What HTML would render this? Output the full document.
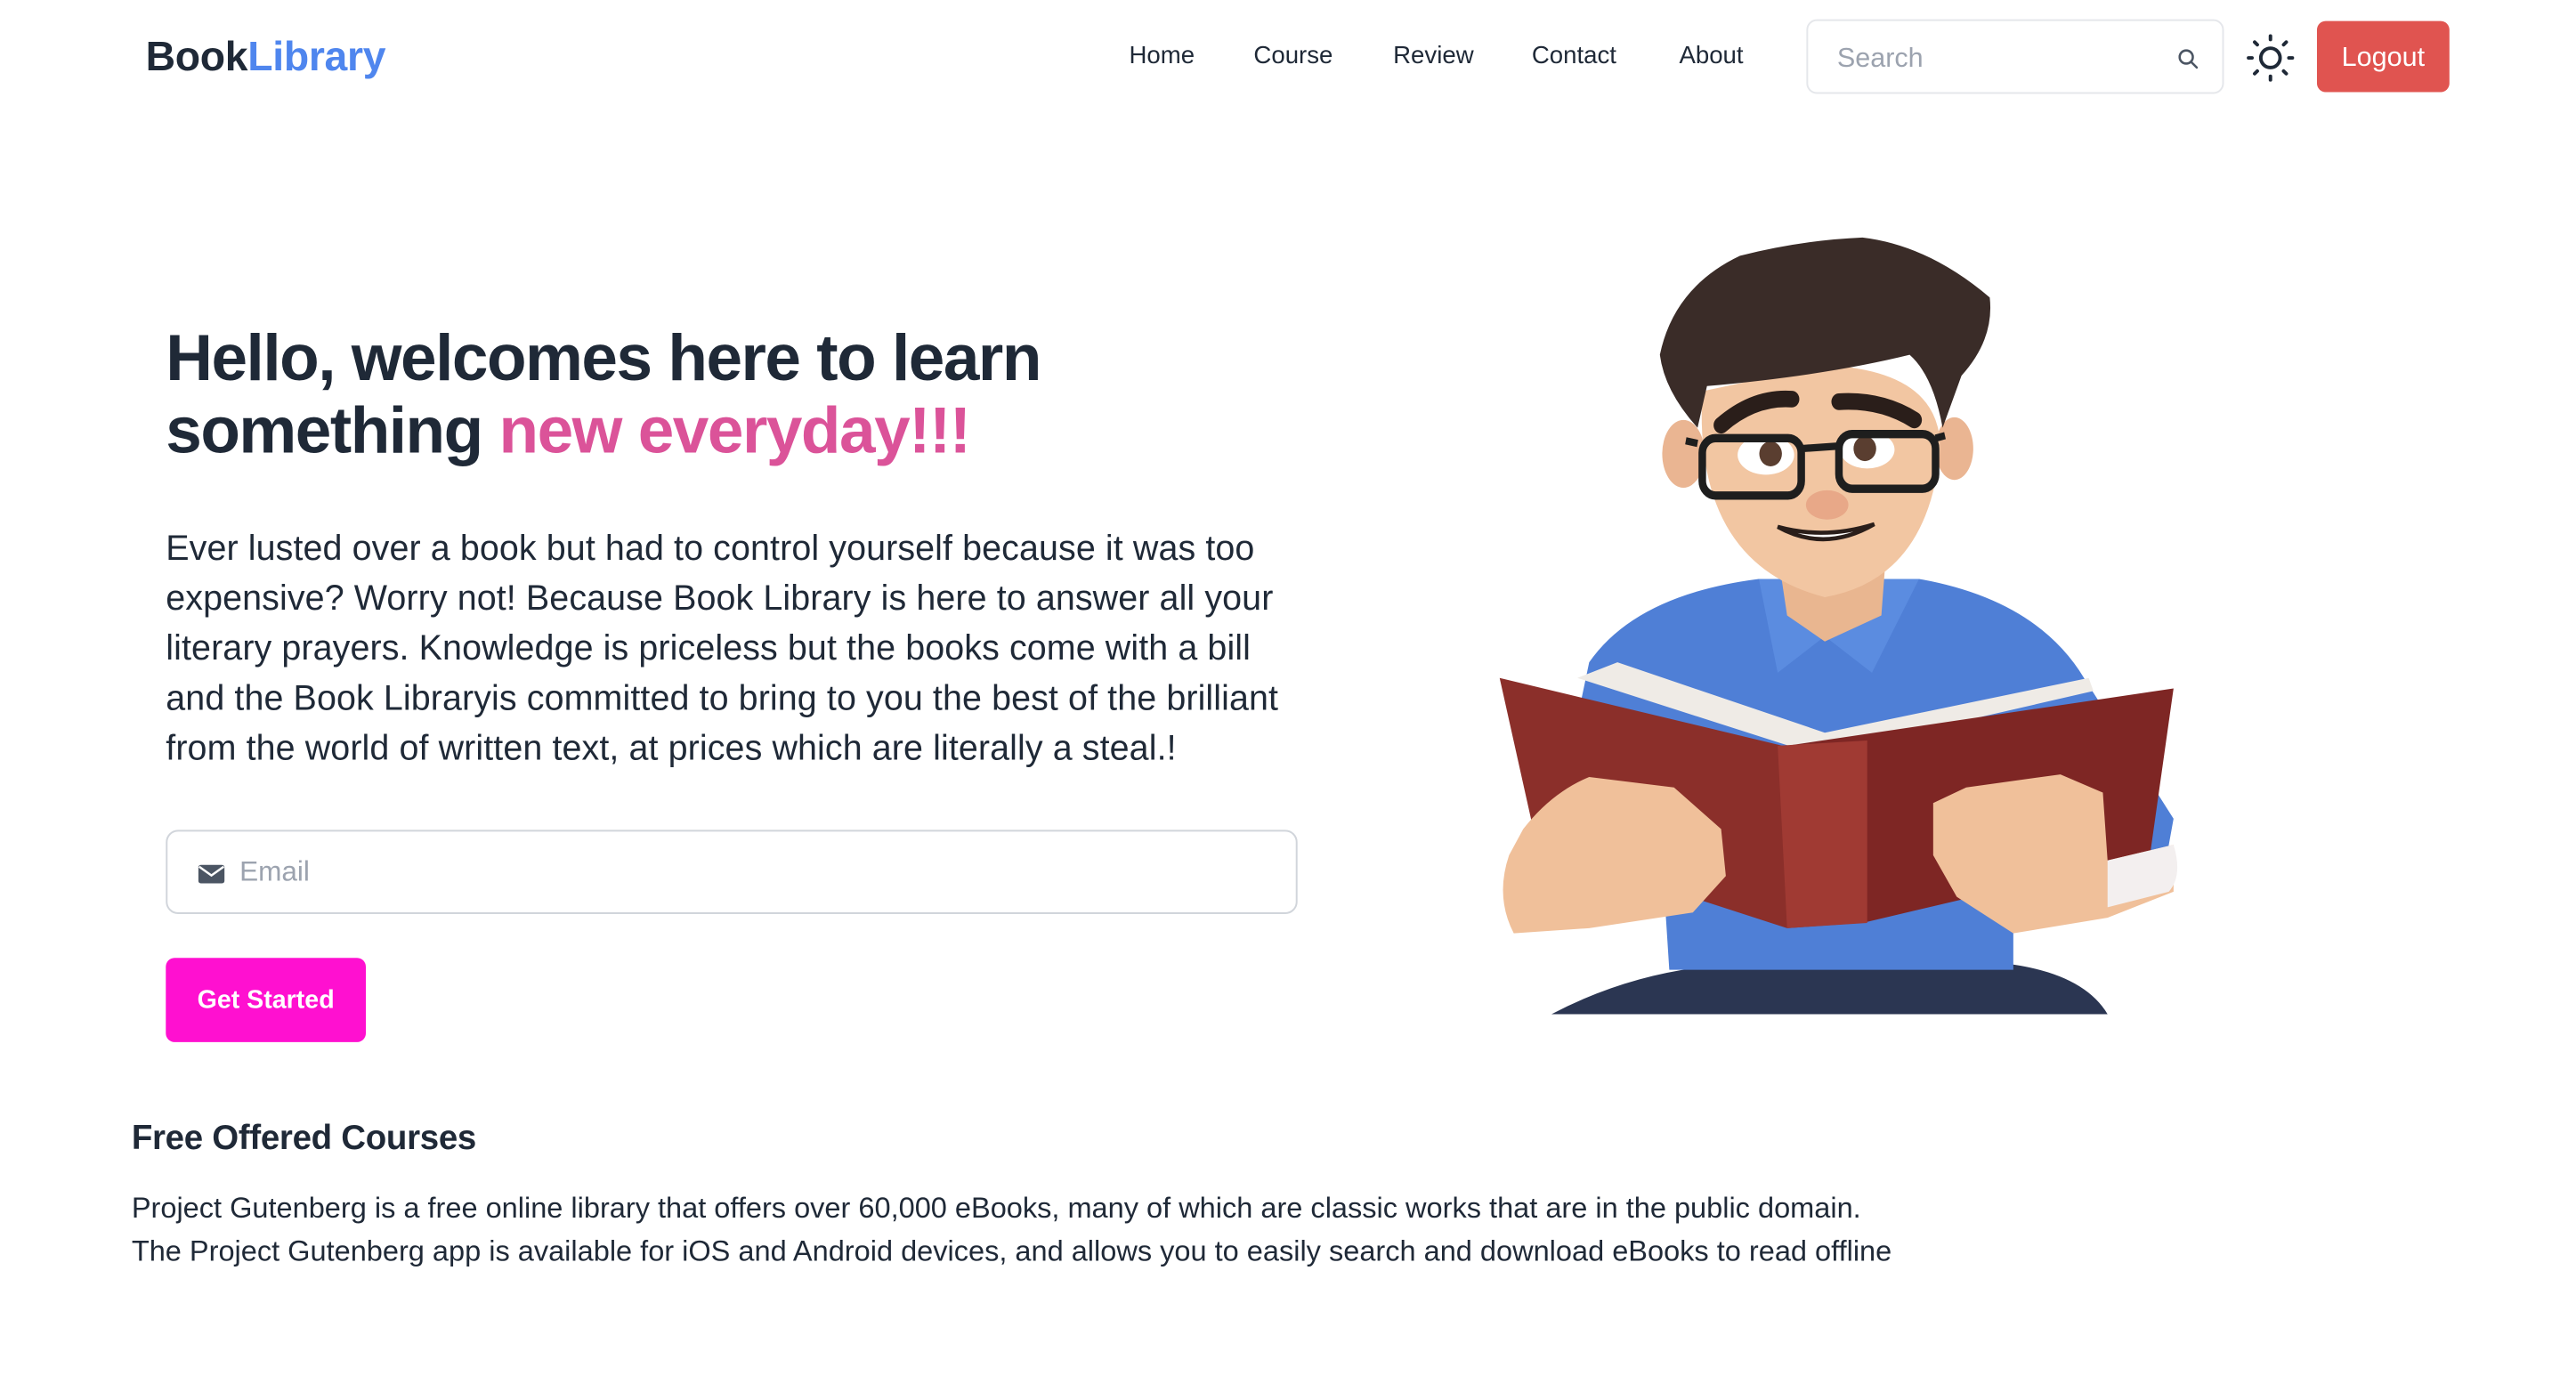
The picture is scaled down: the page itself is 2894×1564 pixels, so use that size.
<!DOCTYPE html>
<html><head><meta charset="utf-8"><style>
*{margin:0;padding:0;box-sizing:border-box}
body{width:2894px;height:1564px;background:#fff;font-family:"Liberation Sans",sans-serif;color:#1f2937;position:relative;overflow:hidden}
#w{position:absolute;left:0;top:0;width:2936px;height:1587px;transform:scale(0.9856);transform-origin:0 0}
.a{position:absolute;white-space:nowrap}
.logo{left:166px;top:36px;font-size:47px;font-weight:bold;letter-spacing:-0.3px}
.logo span{color:#4f86ee}
.nav{top:47px;font-size:28px;color:#1f2937}
.search{left:2059px;top:22px;width:476px;height:85px;border:2px solid #e5e7eb;border-radius:12px}
.search span{position:absolute;left:33px;top:24px;font-size:31px;color:#9ca3af}
.logout{left:2641px;top:24px;width:151px;height:81px;background:#e05450;border-radius:10px;color:#fff;font-size:31px;text-align:center;line-height:81px}
h1{position:absolute;left:189px;top:366px;font-size:74px;line-height:83px;font-weight:bold;letter-spacing:-1.5px;color:#1f2937}
h1 span{color:#db5399}
.p{left:189px;top:597px;font-size:40px;line-height:57px;color:#1f2937;letter-spacing:0.1px}
.email{left:189px;top:946px;width:1290px;height:96px;border:2px solid #d1d5db;border-radius:14px}
.email span{position:absolute;left:82px;top:27px;font-size:32px;color:#9ca3af}
.btn{left:189px;top:1092px;width:228px;height:96px;background:#ff10d0;border-radius:10px;color:#fff;font-weight:bold;font-size:29px;text-align:center;line-height:96px}
.h2{left:150px;top:1276px;font-size:39px;font-weight:bold;letter-spacing:-0.3px}
.p2{left:150px;top:1352px;font-size:33px;line-height:49px;letter-spacing:0}
</style></head><body><div id="w">
<div class="a logo">Book<span>Library</span></div>
<div class="a nav" style="left:1287px">Home</div>
<div class="a nav" style="left:1429px">Course</div>
<div class="a nav" style="left:1588px">Review</div>
<div class="a nav" style="left:1746px">Contact</div>
<div class="a nav" style="left:1914px">About</div>
<div class="a search"><span>Search</span>
<svg style="position:absolute;left:420px;top:30px" width="26" height="26" viewBox="0 0 26 26"><circle cx="11" cy="11" r="7.5" fill="none" stroke="#4b5563" stroke-width="2.6"/><path d="M16.5 16.5L23 23" stroke="#4b5563" stroke-width="2.6" stroke-linecap="round"/></svg></div>
<svg class="a" style="left:2560px;top:38px" width="56" height="56" viewBox="0 0 56 56"><circle cx="28" cy="28" r="11" fill="none" stroke="#1f2937" stroke-width="4"/><g stroke="#1f2937" stroke-width="4" stroke-linecap="round"><path d="M28 3v4M28 49v4M3 28h4M49 28h4M10 10l3 3M43 43l3 3M10 46l3-3M43 13l3-3"/></g></svg>
<div class="a logout">Logout</div>
<h1>Hello, welcomes here to learn<br>something <span>new everyday!!!</span></h1>
<div class="a p">Ever lusted over a book but had to control yourself because it was too<br>expensive? Worry not! Because Book Library is here to answer all your<br>literary prayers. Knowledge is priceless but the books come with a bill<br>and the Book Libraryis committed to bring to you the best of the brilliant<br>from the world of written text, at prices which are literally a steal.!</div>
<div class="a email"><svg style="position:absolute;left:35px;top:36px" width="30" height="24" viewBox="0 0 30 24"><rect x="0" y="2" width="30" height="21" rx="3" fill="#4b5563"/><path d="M1 4l14 10 14-10" fill="none" stroke="#fff" stroke-width="2.5"/></svg><span>Email</span></div>
<div class="a btn">Get Started</div>
<div class="a h2">Free Offered Courses</div>
<div class="a p2">Project Gutenberg is a free online library that offers over 60,000 eBooks, many of which are classic works that are in the public domain.<br>The Project Gutenberg app is available for iOS and Android devices, and allows you to easily search and download eBooks to read offline</div>
<svg class="a" style="left:1704px;top:250px" width="838" height="915" viewBox="0 0 1560 1540" preserveAspectRatio="none">
<path d="M120 1525 Q300 1440 500 1430 L1100 1430 Q1250 1450 1300 1525 Z" fill="#2b3652"/>
<path d="M200 850 Q300 720 560 690 L900 690 Q1150 730 1250 880 L1440 1150 L1420 1250 L1100 1300 L1100 1440 L370 1440 L360 1300 L100 1280 Z" fill="#4f7fd6"/>
<path d="M560 690 L600 870 L700 800 L800 870 L900 690 Z" fill="#5b8ce0"/>
<path d="M600 640 L620 760 L700 810 L820 760 L830 640 Z" fill="#e9b690"/>
<ellipse cx="400" cy="450" rx="45" ry="65" fill="#eab592"/>
<ellipse cx="975" cy="440" rx="40" ry="60" fill="#eab592"/>
<path d="M440 330 Q420 660 700 725 Q920 690 945 440 Q945 290 700 280 Z" fill="#f2c6a2"/>
<path d="M350 260 Q380 130 520 70 Q650 40 780 35 Q920 50 1050 150 Q1060 230 990 300 L950 400 Q930 300 880 260 Q700 300 450 320 L430 400 Q360 330 350 260 Z" fill="#3a2c28"/>
<path d="M480 395 Q550 340 630 345" stroke="#2a1e1a" stroke-width="32" fill="none" stroke-linecap="round"/>
<path d="M730 350 Q820 345 890 385" stroke="#2a1e1a" stroke-width="32" fill="none" stroke-linecap="round"/>
<ellipse cx="575" cy="452" rx="60" ry="38" fill="#fff"/><circle cx="585" cy="450" r="24" fill="#5a3e30"/>
<ellipse cx="790" cy="442" rx="58" ry="36" fill="#fff"/><circle cx="785" cy="440" r="24" fill="#5a3e30"/>
<rect x="440" y="420" width="210" height="110" rx="28" fill="none" stroke="#1e1e1e" stroke-width="16"/>
<rect x="730" y="412" width="205" height="105" rx="28" fill="none" stroke="#1e1e1e" stroke-width="16"/>
<path d="M650 440 L730 435 M430 430 L405 425 M935 420 L955 415" stroke="#1e1e1e" stroke-width="14"/>
<ellipse cx="705" cy="548" rx="45" ry="28" fill="#e8a888"/>
<path d="M600 590 Q700 640 805 585 Q700 615 600 590 Z" fill="#fff" stroke="#2a1e1a" stroke-width="8"/>
<path d="M175 880 L260 850 L700 985 L1260 880 L1270 905 L790 1005 L630 1012 Z" fill="#efebe6"/>
<path d="M10 880 L610 1010 L620 1360 L90 1205 Z" fill="#8b2f2a"/>
<path d="M620 1010 L1440 900 L1390 1220 L780 1350 L620 1360 Z" fill="#7e2624"/>
<path d="M600 1010 L790 1000 L790 1350 L620 1360 Z" fill="#a03a33"/>
<path d="M60 1170 Q120 1100 200 1070 L380 1090 L480 1170 L490 1260 L420 1330 L200 1360 L40 1370 Q0 1300 30 1220 Z" fill="#f0c09a"/>
<path d="M930 1120 L1000 1090 L1200 1065 L1290 1100 L1300 1230 L1440 1200 L1440 1290 L1300 1340 L1100 1370 L980 1300 L930 1220 Z" fill="#f0c09a"/>
<path d="M1300 1230 L1440 1200 Q1460 1260 1430 1290 L1300 1320 Z" fill="#f3efef"/>
</svg>
</div></body></html>
